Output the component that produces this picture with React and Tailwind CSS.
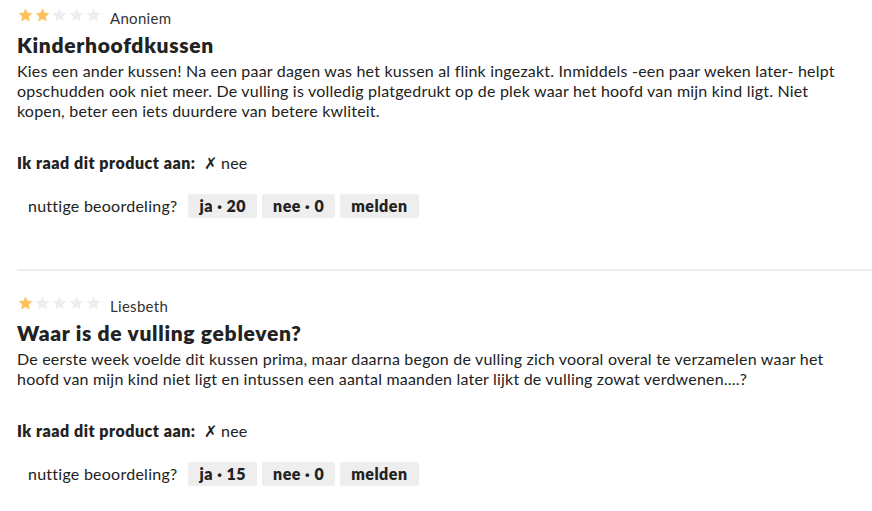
import React from 'react';

const reviews = [
  {
    rating: 2,
    author: 'Anoniem',
    title: 'Kinderhoofdkussen',
    lines: [
      'Kies een ander kussen! Na een paar dagen was het kussen al flink ingezakt. Inmiddels -een paar weken later- helpt',
      'opschudden ook niet meer. De vulling is volledig platgedrukt op de plek waar het hoofd van mijn kind ligt. Niet',
      'kopen, beter een iets duurdere van betere kwliteit.',
    ],
    yes: 20,
    no: 0,
  },
  {
    rating: 1,
    author: 'Liesbeth',
    title: 'Waar is de vulling gebleven?',
    lines: [
      'De eerste week voelde dit kussen prima, maar daarna begon de vulling zich vooral overal te verzamelen waar het',
      'hoofd van mijn kind niet ligt en intussen een aantal maanden later lijkt de vulling zowat verdwenen....?',
    ],
    yes: 15,
    no: 0,
  },
];

const Star = ({ filled }) => (
  <svg width="17" height="16" viewBox="0 0 24 24">
    <path
      d="M12 1.8l3.1 6.9 7.4.7-5.6 5 1.6 7.4L12 18l-6.5 3.8 1.6-7.4-5.6-5 7.4-.7z"
      fill={filled ? '#fdc25e' : '#eeeeee'}
    />
  </svg>
);

const Review = ({ review, first }) => (
  <div className={first ? 'pt-[6px] pb-[51px]' : 'pt-[23px]'}>
    <div className="flex items-center h-[18px]">
      <div className="flex">
        {[1, 2, 3, 4, 5].map(i => (
          <Star key={i} filled={i <= review.rating} />
        ))}
      </div>
      <span className="ml-[8px] mt-[6px] text-[15px] tracking-[0.3px] text-[#333]">{review.author}</span>
    </div>
    <h3 className="mt-[7px] text-[21px] leading-[28px] font-extrabold tracking-[0.7px] text-[#222]">{review.title}</h3>
    <p className="mt-[2px] text-[16px] leading-[20px] tracking-[0.2px] text-[#222]">
      {review.lines.map((line, i) => (
        <React.Fragment key={i}>
          {line}
          {i < review.lines.length - 1 && <br />}
        </React.Fragment>
      ))}
    </p>
    <div className="mt-[32px] flex items-center text-[16px] leading-[20px] text-[#222]">
      <span className="font-extrabold tracking-[0.5px]">Ik raad dit product aan:</span>
      <span className="ml-[8px] tracking-[0.2px]">✗ nee</span>
    </div>
    <div className="mt-[21px] ml-[11px] flex items-center text-[16px] text-[#222]">
      <span className="mr-[11px] tracking-[0.25px]">nuttige beoordeling?</span>
      <div className="flex gap-[5px]">
        <button className="h-[24px] px-[11px] rounded-[2px] bg-[#eeeeee] font-extrabold tracking-[0.5px]">ja · {review.yes}</button>
        <button className="h-[24px] px-[11px] rounded-[2px] bg-[#eeeeee] font-extrabold tracking-[0.5px]">nee · {review.no}</button>
        <button className="h-[24px] px-[11px] rounded-[2px] bg-[#eeeeee] font-extrabold tracking-[0.5px]">melden</button>
      </div>
    </div>
  </div>
);

export default function App() {
  return (
    <div className="w-[872px] h-[511px] bg-white pl-[17px] overflow-hidden" style={{ fontFamily: 'Lato, "Noto Sans", sans-serif' }}>
      {reviews.map((r, i) => (
        <React.Fragment key={i}>
          {i > 0 && <div className="border-t-2 border-[#eeeeee]" />}
          <Review review={r} first={i === 0} />
        </React.Fragment>
      ))}
    </div>
  );
}
